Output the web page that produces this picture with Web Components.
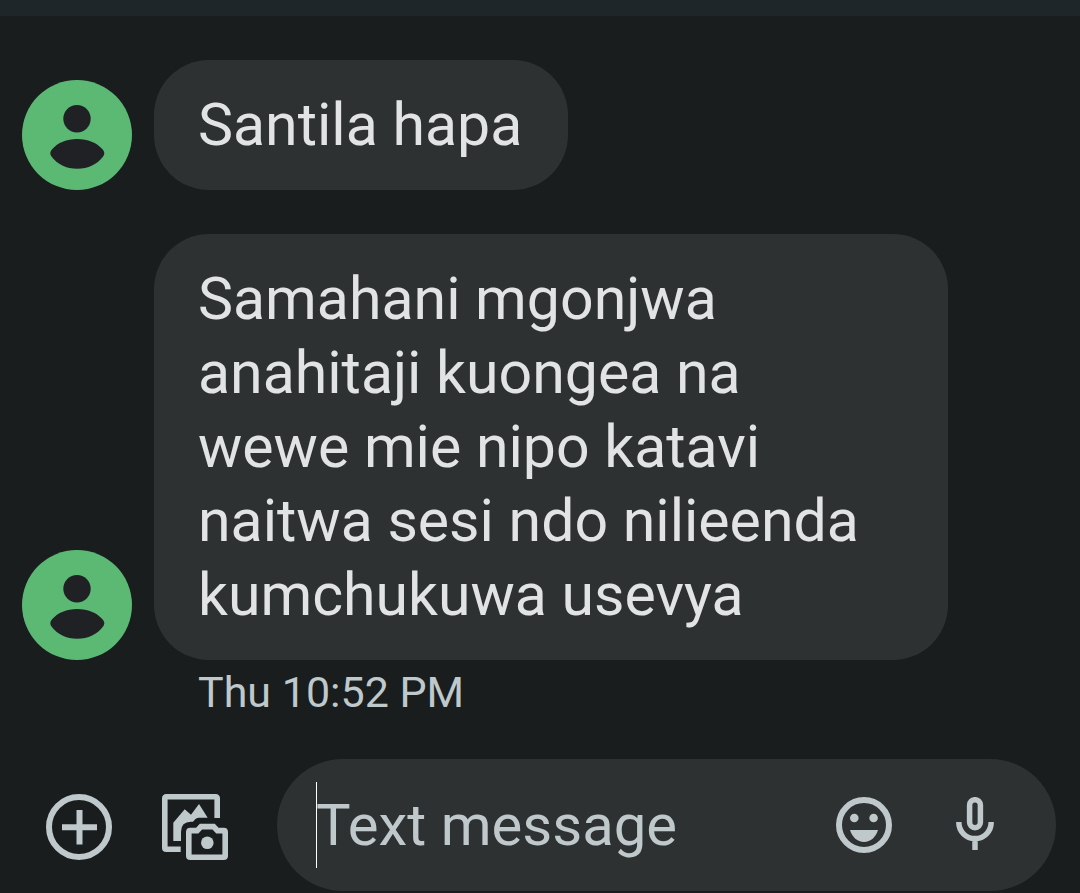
<!DOCTYPE html>
<html lang="sw">
<head>
<meta charset="utf-8">
<meta name="viewport" content="width=device-width, initial-scale=1">
<title>Messages</title>
<style>
  :root {
    --bg: #191d1e;
    --strip: #1f2629;
    --surface: #2e3132;
    --text: #e1e3e4;
    --muted: #bfc8cb;
    --green: #5bb974;
  }
  body {
    margin: 0;
    background: var(--bg);
    color: var(--text);
    font-family: Roboto, "Liberation Sans", sans-serif;
  }
</style>
</head>
<body>
<message-thread>
  <chat-message>Santila hapa</chat-message>
  <chat-message>Samahani mgonjwa
anahitaji kuongea na
wewe mie nipo katavi
naitwa sesi ndo nilieenda
kumchukuwa usevya<time slot="time">Thu 10:52 PM</time></chat-message>
  <message-composer slot="composer"></message-composer>
</message-thread>
<script>
  function define(name, markup) {
    const template = document.createElement('template');
    template.innerHTML = markup;
    customElements.define(name, class extends HTMLElement {
      constructor() {
        super();
        this.attachShadow({ mode: 'open' }).append(template.content.cloneNode(true));
      }
    });
  }

  define('user-avatar', `
    <style>
      :host { display: block; flex: none; width: 110px; height: 110px; color: var(--green); }
      svg { display: block; }
    </style>
    <svg width="110" height="110" viewBox="0 0 110 110" aria-hidden="true">
      <circle cx="55" cy="55" r="55" fill="currentColor"/>
      <g fill="#202124">
        <circle cx="55" cy="38.7" r="13.7"/>
        <path d="M28.3 73.5c0-1.6.7-2.9 1.8-4.2C36 62.6 44.500 59 55.200 59s19.300 3.600 25.300 10.300c1.100 1.300 1.800 2.600 1.800 4.200 0 1.100-.5 2-1.200 2.900C75.300 84 66.200 88.700 55.200 88.700S35.300 84 29.500 76.400c-.7-.9-1.200-1.800-1.200-2.900z"/>
      </g>
    </svg>`);

  define('chat-message', `
    <style>
      :host { display: grid; grid-template-columns: auto minmax(0, 1fr); column-gap: 22px; align-items: end; }
      .bubble {
        justify-self: start;
        box-sizing: border-box;
        padding: 28px 46px 28px 44px;
        border-radius: 55px;
        background: var(--surface);
        font-size: 59px;
        line-height: 74px;
        white-space: pre-line;
      }
      :host(:nth-of-type(2)) .bubble { justify-self: stretch; }
      .time {
        grid-column: 2;
        padding-left: 44px;
        color: var(--muted);
        font-size: 43px;
      }
      ::slotted(time) { display: block; line-height: 64px; }
    </style>
    <user-avatar></user-avatar>
    <div class="bubble"><slot></slot></div>
    <div class="time"><slot name="time"></slot></div>`);

  define('message-composer', `
    <style>
      :host { display: flex; align-items: center; padding: 0 24px 2px 46px; color: var(--muted); }
      button {
        flex: none; display: grid; place-items: center;
        margin: 0; padding: 0; border: 0; background: none; color: inherit;
      }
      svg { display: block; }
      .tools { display: flex; gap: 50px; margin: 4px 49px 0 0; }
      .field {
        flex: 1; min-width: 0; display: flex; align-items: center;
        box-sizing: border-box; height: 132px; padding: 0 62px 0 39px;
        border-radius: 66px; background: var(--surface);
      }
      .entry { position: relative; flex: 1; min-width: 0; }
      .entry::before {
        content: ""; position: absolute; left: 0; top: 0; bottom: 0;
        width: 1px; background: #fff;
      }
      input {
        display: block; box-sizing: border-box; width: 100%; height: 86px;
        margin: 0; padding: 0; border: 0; outline: 0; background: none;
        font-family: inherit; font-size: 58px; color: var(--text);
      }
      input::placeholder { color: var(--muted); opacity: 1; }
      .mic { margin: 0 0 4px 64px; }
    </style>
    <div class="tools">
      <button type="button" aria-label="Add">
        <svg width="66" height="66" viewBox="0 0 66 66" fill="none" stroke="currentColor" stroke-width="6">
          <circle cx="33" cy="33" r="30"/><path d="M33.500 16v34.500M16 33.200h35"/>
        </svg>
      </button>
      <button type="button" aria-label="Gallery">
        <svg width="66" height="66" viewBox="0 0 66 66" fill="none" stroke="currentColor" stroke-width="5.600">
          <path d="M55.200 24V4.300q0-1.500-1.500-1.500H4.300q-1.500 0-1.500 1.500v49.400q0 1.500 1.500 1.500h14.400"/>
          <path d="M11.300 47V28.700L22.700 15.300 29 20.700 37 10l8.700 13.700H36.500q-2 0-3.300 1.500l-2.200 2.500H29q-10 0-10 10V47z" fill="currentColor" stroke="none"/>
          <path d="M28.300 36.600h6.900l3.800-4h12.600l3.800 4h6.300q1.500 0 1.500 1.500v23.600q0 1.500-1.500 1.500H28.300q-1.500 0-1.500-1.500V38.100q0-1.500 1.500-1.500z"/>
          <circle cx="45.300" cy="48.700" r="6.300" fill="currentColor" stroke="none"/>
        </svg>
      </button>
    </div>
    <div class="field">
      <div class="entry"><input type="text" placeholder="Text message" aria-label="Text message"></div>
      <button type="button" aria-label="Emoji">
        <svg width="56" height="56" viewBox="0 0 56 56" fill="currentColor">
          <circle cx="28" cy="28" r="25" fill="none" stroke="currentColor" stroke-width="6"/>
          <circle cx="18.300" cy="21" r="4.300"/><circle cx="37.600" cy="21" r="4.300"/>
          <path d="M14 33h28c-2 7-7.400 12-14 12s-12-5-14-12z"/>
        </svg>
      </button>
      <button class="mic" type="button" aria-label="Voice message">
        <svg width="38" height="53" viewBox="0 0 38 53" fill="none" stroke="currentColor" stroke-width="5.500">
          <rect x="13.600" y="2.700" width="10.800" height="28" rx="5.400"/>
          <path d="M2.800 25c0 9.500 7 16.500 16.200 16.500S35.200 34.500 35.200 25M19 41v12"/>
        </svg>
      </button>
    </div>`);

  define('message-thread', `
    <style>
      :host { display: flex; flex-direction: column; min-height: 100vh; }
      header { height: 16px; background: var(--strip); }
      .list { flex: 1; display: flex; flex-direction: column; gap: 44px; padding: 44px 132px 35px 22px; }
    </style>
    <header></header>
    <div class="list"><slot></slot></div>
    <slot name="composer"></slot>`);
</script>
</body>
</html>
